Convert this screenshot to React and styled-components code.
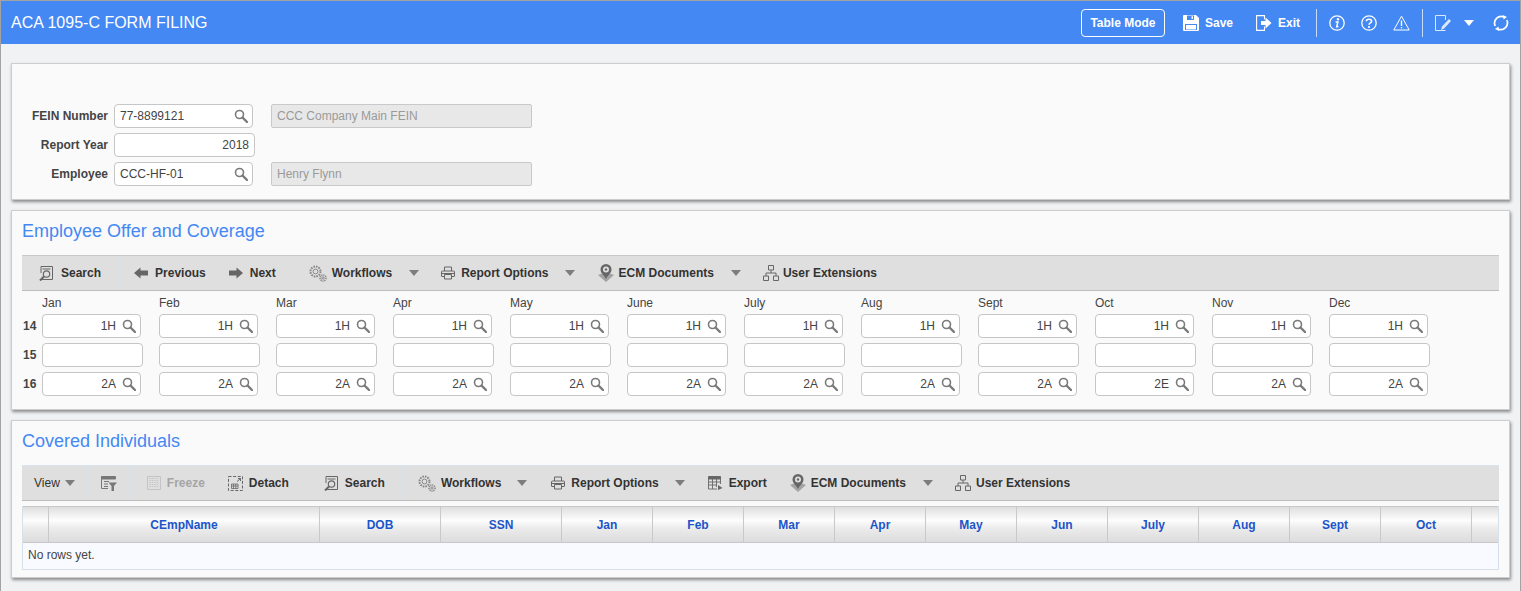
import React from 'react';
import styled, { createGlobalStyle } from 'styled-components';

const GlobalStyle = createGlobalStyle`
  html, body {
    margin: 0;
    height: 100%;
    overflow: hidden;
    background: #f1f2f4;
    font-family: "Liberation Sans", Arial, sans-serif;
    font-size: 12px;
    color: #333;
  }
`;

const Frame = styled.div`
  box-sizing: border-box;
  height: 591px;
  border: 1px solid #a3a3a3;
  border-bottom: 0;
  background: #f1f2f4;
`;

const TopBar = styled.header`
  display: flex;
  align-items: center;
  height: 43px;
  padding-left: 10px;
  background: #4488f4;
  color: #fff;
`;

const TopTitle = styled.h1`
  flex: 1;
  margin: 0;
  font-size: 16px;
  font-weight: 400;
`;

const ModeButton = styled.button`
  box-sizing: border-box;
  width: 84px;
  height: 28px;
  padding: 0;
  border: 1px solid #fff;
  border-radius: 4px;
  background: transparent;
  color: #fff;
  font: bold 12px "Liberation Sans", Arial, sans-serif;
`;

const TopAction = styled.span`
  display: flex;
  align-items: center;
  gap: 6px;
  margin-left: ${(p) => p.$left}px;
  font-weight: 700;
`;

const TopDivider = styled.span`
  width: 1px;
  height: 28px;
  margin-left: ${(p) => p.$left}px;
  background: #c7dcfb;
`;

const Content = styled.main`
  padding: 19px 10px 0;
`;

const Panel = styled.section`
  box-sizing: border-box;
  height: ${(p) => p.$height}px;
  margin-bottom: 10px;
  padding: 0 10px;
  border: 1px solid #cdcdcd;
  background: #fafafa;
  box-shadow: 1px 2px 3px #8a8a8a;
`;

const FormStack = styled.div`
  display: flex;
  flex-direction: column;
  gap: 5px;
  margin-left: -10px;
  padding-top: 40px;
`;

const FormRow = styled.div`
  display: flex;
  align-items: center;
`;

const FieldLabel = styled.label`
  width: 96px;
  margin-right: 6px;
  color: #444;
  font-weight: 700;
  text-align: right;
`;

const InputBox = styled.div`
  box-sizing: border-box;
  display: flex;
  align-items: center;
  justify-content: ${(p) => (p.$align === 'left' ? 'space-between' : 'flex-end')};
  width: ${(p) => p.$width}px;
  height: 24px;
  padding: 0 ${(p) => (p.$icon ? 4 : 5)}px 0 5px;
  border: 1px solid #c6c6c6;
  border-radius: 4px;
  background: #fff;
  color: #444;
  svg {
    margin-left: ${(p) => (p.$align === 'left' ? 0 : 6)}px;
  }
`;

const ReadOnlyBox = styled.div`
  box-sizing: border-box;
  display: flex;
  align-items: center;
  width: 261px;
  height: 24px;
  margin-left: ${(p) => p.$left}px;
  padding: 0 5px;
  border: 1px solid #c9c9c9;
  border-radius: 2px;
  background: #e8e8e8;
  color: #9a9a9a;
`;

const PanelTitle = styled.h2`
  height: 40px;
  margin: 0 0 4px;
  color: #4488f4;
  font-size: 18px;
  font-weight: 400;
  line-height: 40px;
`;

const Toolbar = styled.div`
  box-sizing: border-box;
  display: flex;
  align-items: center;
  height: 36px;
  border-top: 1px solid #c9c9c9;
  border-bottom: 1px solid #bdbdbd;
  background: #dfdfdf;
  color: #333;
  &[data-grid] {
    border-top-color: #d9e4f0;
  }
`;

const ToolItem = styled.span`
  display: flex;
  align-items: center;
  gap: ${(p) => p.$gap ?? 6}px;
  margin-left: ${(p) => p.$left}px;
  color: ${(p) => (p.$disabled ? '#a5a5a5' : '#333')};
  font-weight: ${(p) => (p.$plain ? 400 : 700)};
  white-space: nowrap;
`;

const ToolDivider = styled.span`
  width: 1px;
  height: 34px;
  margin-left: ${(p) => p.$left}px;
  background: #d8dfe6;
`;

const MonthGrid = styled.div`
  display: grid;
  grid-template-columns: 20px repeat(12, 117px);
  grid-auto-rows: 24px;
  row-gap: 5px;
  align-items: center;
`;

const MonthHead = styled.div`
  height: 23px;
  line-height: 24px;
  align-self: start;
  color: #444;
`;

const MonthHeadRow = styled(MonthGrid)`
  grid-auto-rows: 23px;
`;

const RowNumber = styled.span`
  padding-left: 1px;
  color: #444;
  font-weight: 700;
`;

const DataTable = styled.div`
  margin-top: 5px;
  border: 1px solid #d6e0ea;
`;

const TableHead = styled.div`
  display: grid;
  grid-template-columns: 26px 271px 121px 121px repeat(10, 91px) 1fr;
  height: 35px;
  border-bottom: 1px solid #c8c8c8;
  border-top: 1px solid #c8c8c8;
  margin-top: -1px;
  background: linear-gradient(#dedede 0%, #fdfdfd 38%, #ececec 60%, #dcdcdc 100%);
`;

const HeadCell = styled.div`
  display: flex;
  align-items: center;
  justify-content: center;
  border-right: 1px solid #c9c9c9;
  color: #1c55c9;
  font-weight: 700;
  &:last-child {
    border-right: 0;
  }
`;

const EmptyRow = styled.div`
  height: 26px;
  padding-left: 5px;
  background: #f8faff;
  color: #444;
  line-height: 24px;
`;

const Glass = ({ size = 14 }) => (
  <svg width={size} height={size} viewBox="0 0 14 14" fill="none" stroke="#7a7a7a">
    <circle cx="5.5" cy="5.5" r="4" strokeWidth="1.6" />
    <path d="M8.5 8.5 L13 13" strokeWidth="2.4" strokeLinecap="round" />
  </svg>
);

const Caret = ({ color = '#7d7d7d', width = 10 }) => (
  <svg width={width} height="6" viewBox="0 0 10 6">
    <path d="M0 0 H10 L5 6 Z" fill={color} />
  </svg>
);

const SaveIcon = () => (
  <svg width="16" height="16" viewBox="0 0 16 16">
    <path d="M0 1 Q0 0 1 0 H13 L16 3 V15 Q16 16 15 16 H1 Q0 16 0 15 Z" fill="#fff" />
    <path d="M4 0.5 H11 V5 H4 Z M2 9 H14 V15 H2 Z" fill="#4488f4" />
    <path d="M8.5 1.2 H10 V4 H8.5 Z M3 10 H13 V14.5 H3 Z" fill="#fff" />
  </svg>
);

const ExitIcon = () => (
  <svg width="16" height="16" viewBox="0 0 16 16" fill="none">
    <path d="M8.5 4.5 V0.6 H0.6 V15.4 H8.5 V11.5" stroke="#fff" strokeWidth="1.1" />
    <path d="M5 6 H9.5 V2.5 L15.5 8 L9.5 13.5 V10 H5 Z" fill="#fff" />
  </svg>
);

const InfoIcon = () => (
  <svg width="16" height="16" viewBox="0 0 16 16" fill="none">
    <circle cx="8" cy="8" r="7.2" stroke="#fff" strokeWidth="1.3" />
    <circle cx="9" cy="4.2" r="1.2" fill="#fff" />
    <path d="M6.6 7 H8.9 L7.7 11.8 H9.4" stroke="#fff" strokeWidth="1.5" />
  </svg>
);

const HelpIcon = () => (
  <svg width="16" height="16" viewBox="0 0 16 16" fill="none">
    <circle cx="8" cy="8" r="7.2" stroke="#fff" strokeWidth="1.3" />
    <path d="M5.4 6.2 C5.4 3.6 10.6 3.6 10.6 6.2 C10.6 8 8 7.8 8 9.8" stroke="#fff" strokeWidth="1.6" />
    <circle cx="8" cy="12" r="1.1" fill="#fff" />
  </svg>
);

const WarnIcon = () => (
  <svg width="17" height="16" viewBox="0 0 17 16" fill="none">
    <path d="M8.5 1.2 L16.2 15 H0.8 Z" stroke="#fff" strokeWidth="1" />
    <path d="M8.5 5.5 V11" stroke="#fff" strokeWidth="1.4" />
    <circle cx="8.5" cy="12.8" r="0.8" fill="#fff" />
  </svg>
);

const EditIcon = () => (
  <svg width="16" height="16" viewBox="0 0 16 16" fill="none">
    <path d="M10.5 5 V0.5 H0.5 V15.5 H5" stroke="#dce9fd" strokeWidth="1" />
    <path d="M6 15 L7 11.5 L14 4 L16 6 L8.8 13.8 Z" fill="#dce9fd" />
    <path d="M5 15.5 H10.5" stroke="#dce9fd" strokeWidth="1" />
  </svg>
);

const RefreshIcon = () => (
  <svg width="16" height="16" viewBox="0 0 16 16" fill="none">
    <path d="M2.2 11 A6.8 6.8 0 0 1 11 1.9" stroke="#fff" strokeWidth="1.7" />
    <path d="M13.8 5 A6.8 6.8 0 0 1 5 14.1" stroke="#fff" strokeWidth="1.7" />
    <path d="M9.8 0 L14 2 L10.6 4.6 Z M6.2 16 L2 14 L5.4 11.4 Z" fill="#fff" />
  </svg>
);

const SearchDocIcon = () => (
  <svg width="14" height="15" viewBox="0 0 14 15" fill="none" stroke="#666">
    <path d="M2 .5 H13.5 V13.5 H3" />
    <path d="M2 .5 V7 M3.5 3 H11.5" />
    <circle cx="7.5" cy="8" r="3.2" strokeWidth="1.2" />
    <path d="M5 10.5 L1 14.5" strokeWidth="2" />
  </svg>
);

const ArrowLeftIcon = () => (
  <svg width="14" height="12" viewBox="0 0 14 12">
    <path d="M0 6 L6.5 0.5 V3.5 H14 V8.5 H6.5 V11.5 Z" fill="#666" />
  </svg>
);

const ArrowRightIcon = () => (
  <svg width="14" height="12" viewBox="0 0 14 12">
    <path d="M14 6 L7.5 0.5 V3.5 H0 V8.5 H7.5 V11.5 Z" fill="#666" />
  </svg>
);

const GearsIcon = () => (
  <svg width="18" height="17" viewBox="0 0 18 17" fill="none" stroke="#888">
    <circle cx="6.5" cy="6.5" r="5" strokeWidth="2" strokeDasharray="1.6 1" />
    <circle cx="6.5" cy="6.5" r="2.4" />
    <circle cx="14" cy="13" r="3" strokeWidth="1.6" strokeDasharray="1.2 .8" />
    <circle cx="14" cy="13" r="1.1" />
  </svg>
);

const PrintIcon = () => (
  <svg width="14" height="14" viewBox="0 0 14 14" fill="none" stroke="#666">
    <path d="M3.5 5 V1 H10.5 V5" />
    <path d="M3 10.5 H1 Q.5 10.5 .5 10 V6 Q.5 5 1.5 5 H12.5 Q13.5 5 13.5 6 V10 Q13.5 10.5 13 10.5 H11" />
    <path d="M3.5 8.5 H10.5 V13 H3.5 Z M1 7.5 H13" />
  </svg>
);

const PinIcon = () => (
  <svg width="16" height="18" viewBox="0 0 16 18">
    <path d="M0 11 L5 9 L8 12 L11 9 L16 11 L8 18 Z" fill="#a3a3a3" />
    <path d="M8 0 A5.5 5.5 0 0 1 13.5 5.5 C13.5 9 10 11 8 15 C6 11 2.5 9 2.5 5.5 A5.5 5.5 0 0 1 8 0 Z" fill="#666" />
    <circle cx="8" cy="5.5" r="3" fill="#dfdfdf" />
    <circle cx="8" cy="5.5" r="1.2" fill="#666" />
  </svg>
);

const OrgIcon = () => (
  <svg width="16" height="16" viewBox="0 0 16 16" fill="none" stroke="#666">
    <path d="M5.5 .5 H10.5 V5 H5.5 Z M.5 11 H5.5 V15.5 H.5 Z M10.5 11 H15.5 V15.5 H10.5 Z" />
    <path d="M8 5 V8 M3 11 V8 H13 V11" />
  </svg>
);

const FilterListIcon = () => (
  <svg width="16" height="15" viewBox="0 0 16 15" fill="none" stroke="#777">
    <path d="M.5 .5 H14.5 V3 H.5 Z" fill="#777" />
    <path d="M.5 3 V12.5 H7 M3 5.5 H8 M3 8 H7 M3 10.5 H7" />
    <path d="M7.5 6.5 H16 L13 10 V15 H10.5 V10 Z" fill="#777" stroke="none" />
  </svg>
);

const FreezeIcon = () => (
  <svg width="14" height="14" viewBox="0 0 14 14" fill="none" stroke="#c4c4c4">
    <path d="M.5 .5 H13.5 V13.5 H.5 Z" />
    <path d="M3 2 V12 M5.5 2 V12 M8 2 V12 M10.5 2 V12" strokeWidth="1.4" strokeDasharray="1 1" />
  </svg>
);

const DetachIcon = () => (
  <svg width="15" height="15" viewBox="0 0 15 15" fill="none" stroke="#666">
    <path d="M.5 .5 H14.5 V14.5 H.5 Z" strokeDasharray="3 1.6" />
    <path d="M9 5.5 L12.5 2.5 M10 2.5 H12.5 V5" />
    <path d="M3.5 8 H10 V12.5 H3.5 Z M3.5 10 H10 M5.5 8 V12.5 M7.8 8 V12.5" strokeWidth=".8" />
  </svg>
);

const ExportIcon = () => (
  <svg width="15" height="14" viewBox="0 0 15 14" fill="none" stroke="#666">
    <path d="M.5 .5 H12.5 V3 H.5 Z" fill="#666" />
    <path d="M.5 3 V13 H9 M12.5 3 V8 M.5 6 H12.5 M.5 9 H9 M4.5 3 V13 M8.5 3 V11" strokeWidth=".9" />
    <path d="M10 9 L14.5 12 L10 14 Z" fill="#666" stroke="none" />
  </svg>
);

const months = ['Jan', 'Feb', 'Mar', 'Apr', 'May', 'June', 'July', 'Aug', 'Sept', 'Oct', 'Nov', 'Dec'];
const line16 = ['2A', '2A', '2A', '2A', '2A', '2A', '2A', '2A', '2A', '2E', '2A', '2A'];
const tableCols = ['', 'CEmpName', 'DOB', 'SSN', 'Jan', 'Feb', 'Mar', 'Apr', 'May', 'Jun', 'July', 'Aug', 'Sept', 'Oct', ''];

const LookupRow = ({ number, values }) => (
  <>
    <RowNumber>{number}</RowNumber>
    {values.map((value, i) => (
      <InputBox key={i} $width={99} $icon>
        {value}
        <Glass />
      </InputBox>
    ))}
  </>
);

export default function App() {
  return (
    <>
      <GlobalStyle />
      <Frame>
        <TopBar>
          <TopTitle>ACA 1095-C FORM FILING</TopTitle>
          <ModeButton>Table Mode</ModeButton>
          <TopAction $left={18}><SaveIcon />Save</TopAction>
          <TopAction $left={23}><ExitIcon />Exit</TopAction>
          <TopDivider $left={16} />
          <TopAction $left={12}><InfoIcon /></TopAction>
          <TopAction $left={16}><HelpIcon /></TopAction>
          <TopAction $left={16}><WarnIcon /></TopAction>
          <TopDivider $left={12} />
          <TopAction $left={12}><EditIcon /></TopAction>
          <TopAction $left={13}><Caret color="#fff" /></TopAction>
          <TopAction $left={19}><RefreshIcon /></TopAction>
          <TopAction $left={11} />
        </TopBar>
        <Content>
          <Panel $height={137}>
            <FormStack>
              <FormRow>
                <FieldLabel>FEIN Number</FieldLabel>
                <InputBox $width={139} $align="left" $icon>
                  77-8899121
                  <Glass />
                </InputBox>
                <ReadOnlyBox $left={18}>CCC Company Main FEIN</ReadOnlyBox>
              </FormRow>
              <FormRow>
                <FieldLabel>Report Year</FieldLabel>
                <InputBox $width={141}>2018</InputBox>
              </FormRow>
              <FormRow>
                <FieldLabel>Employee</FieldLabel>
                <InputBox $width={139} $align="left" $icon>
                  CCC-HF-01
                  <Glass />
                </InputBox>
                <ReadOnlyBox $left={18}>Henry Flynn</ReadOnlyBox>
              </FormRow>
            </FormStack>
          </Panel>

          <Panel $height={200}>
            <PanelTitle>Employee Offer and Coverage</PanelTitle>
            <Toolbar>
              <ToolItem $left={17} $gap={8}><SearchDocIcon />Search</ToolItem>
              <ToolDivider $left={17} />
              <ToolItem $left={15} $gap={7}><ArrowLeftIcon />Previous</ToolItem>
              <ToolItem $left={23} $gap={7}><ArrowRightIcon />Next</ToolItem>
              <ToolDivider $left={17} />
              <ToolItem $left={15} $gap={5}><GearsIcon />Workflows</ToolItem>
              <ToolItem $left={17}><Caret /></ToolItem>
              <ToolItem $left={22}><PrintIcon />Report Options</ToolItem>
              <ToolItem $left={16}><Caret /></ToolItem>
              <ToolItem $left={23} $gap={5}><PinIcon />ECM Documents</ToolItem>
              <ToolItem $left={17}><Caret /></ToolItem>
              <ToolItem $left={22} $gap={4}><OrgIcon />User Extensions</ToolItem>
            </Toolbar>
            <MonthHeadRow>
              <span />
              {months.map((month) => (
                <MonthHead key={month}>{month}</MonthHead>
              ))}
            </MonthHeadRow>
            <MonthGrid>
              <LookupRow number="14" values={months.map(() => '1H')} />
              <RowNumber>15</RowNumber>
              {months.map((month) => (
                <InputBox key={month} $width={101} />
              ))}
              <LookupRow number="16" values={line16} />
            </MonthGrid>
          </Panel>

          <Panel $height={158}>
            <PanelTitle>Covered Individuals</PanelTitle>
            <Toolbar data-grid="">
              <ToolItem $left={12} $gap={5} $plain>View<Caret /></ToolItem>
              <ToolDivider $left={13} />
              <ToolItem $left={12}><FilterListIcon /></ToolItem>
              <ToolDivider $left={13} />
              <ToolItem $left={16} $disabled><FreezeIcon />Freeze</ToolItem>
              <ToolItem $left={23}><DetachIcon />Detach</ToolItem>
              <ToolDivider $left={18} />
              <ToolItem $left={16} $gap={7}><SearchDocIcon />Search</ToolItem>
              <ToolDivider $left={17} />
              <ToolItem $left={15} $gap={5}><GearsIcon />Workflows</ToolItem>
              <ToolItem $left={16}><Caret /></ToolItem>
              <ToolItem $left={24}><PrintIcon />Report Options</ToolItem>
              <ToolItem $left={16}><Caret /></ToolItem>
              <ToolItem $left={23}><ExportIcon />Export</ToolItem>
              <ToolItem $left={23} $gap={5}><PinIcon />ECM Documents</ToolItem>
              <ToolItem $left={17}><Caret /></ToolItem>
              <ToolItem $left={22} $gap={5}><OrgIcon />User Extensions</ToolItem>
            </Toolbar>
            <DataTable>
              <TableHead>
                {tableCols.map((col, i) => (
                  <HeadCell key={i}>{col}</HeadCell>
                ))}
              </TableHead>
              <EmptyRow>No rows yet.</EmptyRow>
            </DataTable>
          </Panel>
        </Content>
      </Frame>
    </>
  );
}
